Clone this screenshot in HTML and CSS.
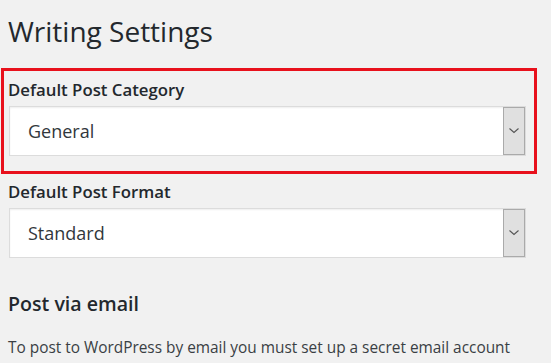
FILE: index.html
```html
<!DOCTYPE html>
<html>
<head>
<meta charset="utf-8">
<link rel="stylesheet" href="styles.css">
</head>
<body>
<div class="page">
  <h1 class="title">Writing Settings</h1>
  <div class="highlight">
    <div class="field">
      <div class="label">Default Post Category</div>
      <div class="select">
        <span class="value">General</span>
        <span class="arrow"><svg width="12" height="8" viewBox="0 0 12 8"><path d="M1.5 1.5 L6 5.5 L10.5 1.5" fill="none" stroke="#555" stroke-width="1.1"/></svg></span>
      </div>
    </div>
  </div>
  <div class="field plain">
    <div class="label">Default Post Format</div>
    <div class="select">
      <span class="value">Standard</span>
      <span class="arrow"><svg width="12" height="8" viewBox="0 0 12 8"><path d="M1.5 1.5 L6 5.5 L10.5 1.5" fill="none" stroke="#555" stroke-width="1.1"/></svg></span>
    </div>
  </div>
  <h2 class="subtitle">Post via email</h2>
  <p class="text">To post to WordPress by email you must set up a secret email account</p>
</div>
</body>
</html>
```

FILE: styles.css
```css
html, body {
  margin: 0;
  padding: 0;
  background: #f1f1f1;
}
body {
  font-family: "Open Sans", "Noto Sans", sans-serif;
  color: #23282d;
  width: 551px;
  height: 363px;
  overflow: hidden;
}
.page {
  display: flex;
  flex-direction: column;
  align-items: flex-start;
  padding-top: 13px;
}
.title {
  margin: 0 0 0 8px;
  font-size: 28px;
  font-weight: 400;
  line-height: 36px;
}
.highlight {
  margin: 19px 0 0 1px;
  width: 517px;
  border: 3px solid #e8111c;
  padding: 7px 8px 15px 5px;
}
.field {
  display: flex;
  flex-direction: column;
  width: 517px;
}
.field.plain {
  padding: 6px 0 0 9px;
}
.label {
  font-size: 16.8px;
  font-weight: 600;
  line-height: 24px;
  margin-left: -1px;
}
.select {
  margin-top: 4px;
  height: 50px;
  box-sizing: border-box;
  display: flex;
  align-items: stretch;
  background: #fff;
  border: 1px solid #dcdcdc;
  box-shadow: inset 0 1px 2px rgba(0,0,0,0.07);
}
.field.plain .select {
  margin-top: 4px;
}
.value {
  flex: 1;
  display: flex;
  align-items: center;
  padding-left: 18px;
  font-size: 18px;
  color: #32373c;
}
.arrow {
  width: 20px;
  background: #e0e0e0;
  border: 1px solid #aaaaaa;
  display: flex;
  align-items: center;
  justify-content: center;
}
.subtitle {
  margin: 33px 0 0 8px;
  font-size: 19.6px;
  font-weight: 600;
  line-height: 26px;
}
.text {
  margin: 20px 0 0 8px;
  font-size: 15.4px;
  line-height: 22px;
  color: #3a3f44;
}
```
